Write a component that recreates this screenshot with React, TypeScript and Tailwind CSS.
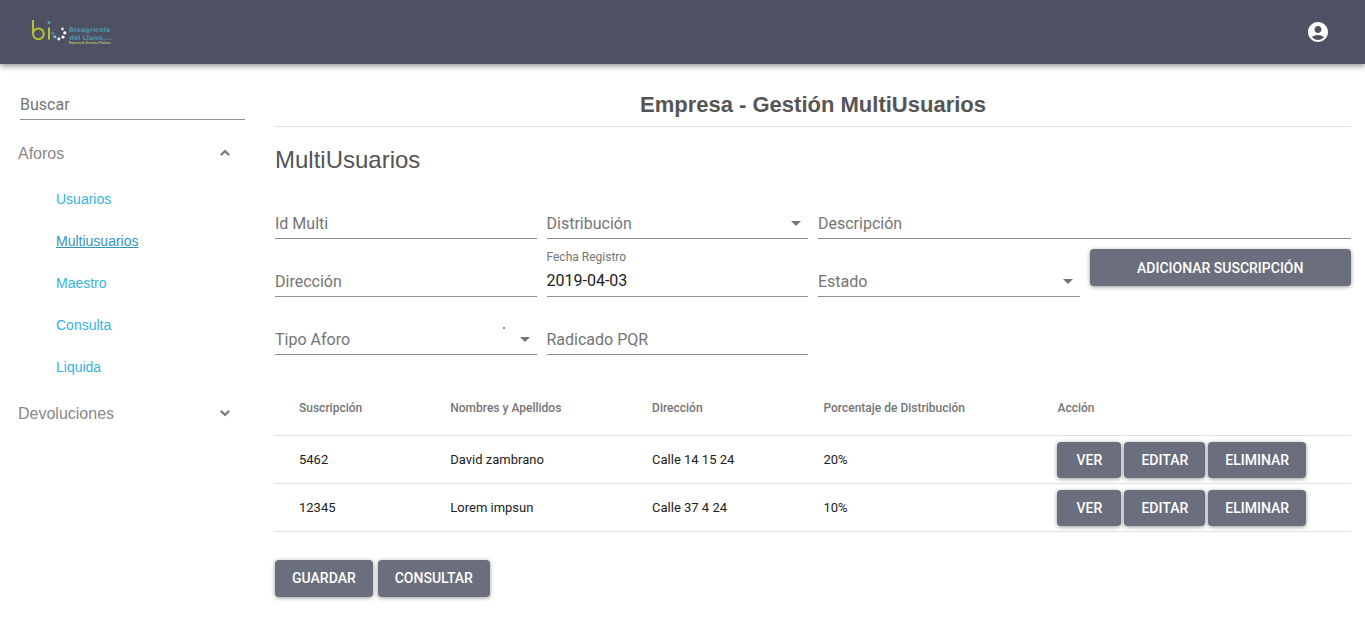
import { useState } from "react";
import type { ReactNode } from "react";
import { MdAccountCircle, MdArrowDropDown } from "react-icons/md";

type FieldProps = {
  id: string;
  label: string;
  initial?: string;
  options?: string[];
  className?: string;
};

function Field({ id, label, initial = "", options, className = "" }: FieldProps) {
  const [value, setValue] = useState(initial);
  const control =
    "col-start-1 row-start-1 h-8 w-full min-w-0 appearance-none rounded-none border-b border-[#8e8e8e] bg-transparent text-base text-[#212121] outline-none focus:border-[#4d5163]";
  const floating = value !== "";
  return (
    <div className={`relative grid h-12 pt-4 ${className}`}>
      {options ? (
        <select id={id} value={value} onChange={(e) => setValue(e.target.value)} className={control}>
          <option value=""></option>
          {options.map((o) => (
            <option key={o}>{o}</option>
          ))}
        </select>
      ) : (
        <input id={id} value={value} onChange={(e) => setValue(e.target.value)} className={control} />
      )}
      <label
        htmlFor={id}
        className={
          floating
            ? "pointer-events-none absolute top-0 left-0 text-xs leading-4 text-[#757575]"
            : "pointer-events-none col-start-1 row-start-1 h-8 pt-px text-base leading-8 text-[#757575]"
        }
      >
        {label}
      </label>
      {options && (
        <MdArrowDropDown
          size={24}
          className="pointer-events-none col-start-1 row-start-1 mt-1 justify-self-end text-[#757575]"
        />
      )}
    </div>
  );
}

function Button({ children, className = "" }: { children: ReactNode; className?: string }) {
  return (
    <button
      type="button"
      className={`min-w-16 rounded bg-[#6b6e7d] px-[17px] text-sm font-medium text-white uppercase shadow-[0_1px_4px_rgba(0,0,0,0.4)] hover:bg-[#5c5f6e] ${className}`}
    >
      {children}
    </button>
  );
}

function Chevron({ up }: { up: boolean }) {
  return (
    <svg width="12" height="8" viewBox="0 0 12 8" fill="none" stroke="#808084" strokeWidth="2.4" aria-hidden="true">
      <path d={up ? "M1.8 6.2 6 2.2l4.2 4" : "M1.8 1.8 6 5.8l4.2-4"} />
    </svg>
  );
}

function Logo() {
  return (
    <svg width="90" height="32" viewBox="0 0 90 32" role="img" aria-label="Bioagrícola del Llano">
      <g fill="none" stroke="#b3c42c" strokeWidth="2">
        <path d="M3 4v13.500" />
        <circle cx="8.400" cy="17.800" r="5.400" />
        <path d="M19 11.500v12" />
      </g>
      <circle cx="19" cy="6.500" r="1.500" fill="#5f9db8" />
      <circle cx="23.800" cy="13.500" r="1.200" fill="#356f94" />
      <circle cx="22.800" cy="17.300" r="1.300" fill="#4c8fb5" />
      <circle cx="24.800" cy="20.800" r="1.500" fill="#8fc1d6" />
      <circle cx="28.800" cy="22.800" r="1.600" fill="#dcebf0" />
      <circle cx="33" cy="21" r="1.600" fill="#ffffff" />
      <circle cx="34.800" cy="16.800" r="1.600" fill="#ffffff" />
      <circle cx="32.500" cy="13" r="1.400" fill="#dfe9ea" />
      <g fill="#5090a8" fontFamily="'DejaVu Sans', sans-serif" fontWeight="700">
        <text x="39" y="16" fontSize="6.500">Bioagrícola</text>
        <text x="39" y="24" fontSize="6.500">del Llano</text>
        <text x="72.500" y="24" fontSize="2.200">S.A ESP</text>
      </g>
      <text x="39" y="28" fontSize="2.800" fill="#c0bd7c" fontFamily="'Liberation Sans', sans-serif" fontWeight="700">
        Empresa de Servicios Públicos
      </text>
    </svg>
  );
}

const links = ["Usuarios", "Multiusuarios", "Maestro", "Consulta", "Liquida"];

const columns = ["Suscripción", "Nombres y Apellidos", "Dirección", "Porcentaje de Distribución", "Acción"];

const rows = [
  ["5462", "David zambrano", "Calle 14 15 24", "20%"],
  ["12345", "Lorem impsun", "Calle 37 4 24", "10%"],
];

function MenuHeading({ label, open, onClick }: { label: string; open: boolean; onClick: () => void }) {
  return (
    <button
      type="button"
      aria-expanded={open}
      onClick={onClick}
      className="flex h-[42px] w-full items-center justify-between pr-[29px] pl-[18px] text-base text-[#888888]"
    >
      <span className="pt-0.5">{label}</span>
      <Chevron up={open} />
    </button>
  );
}

function Sidebar() {
  const [open, setOpen] = useState(true);
  const [returnsOpen, setReturnsOpen] = useState(false);
  return (
    <aside className="w-[260px] shrink-0 pt-2">
      <div className="pr-[15px] pl-5">
        <Field id="buscar" label="Buscar" />
      </div>
      <nav className="pt-3 font-['Liberation_Sans',sans-serif]">
        <MenuHeading label="Aforos" open={open} onClick={() => setOpen(!open)} />
        {open && (
          <ul className="py-1">
            {links.map((name) => (
              <li key={name} className="flex h-[42px] items-center pl-14 text-sm">
                <a
                  href="#"
                  className={name === "Multiusuarios" ? "text-[#3694c0] underline" : "text-[#36b4e0] hover:underline"}
                >
                  {name}
                </a>
              </li>
            ))}
          </ul>
        )}
        <MenuHeading label="Devoluciones" open={returnsOpen} onClick={() => setReturnsOpen(!returnsOpen)} />
      </nav>
    </aside>
  );
}

export default function App() {
  return (
    <div className="min-h-screen bg-white font-[Roboto,sans-serif] text-[#212121]">
      <header className="relative flex h-16 items-center justify-between bg-[#4d5163] pr-[35px] pl-[30px] shadow-[0_2px_6px_rgba(0,0,0,0.45)]">
        <a href="#">
          <Logo />
        </a>
        <button type="button" aria-label="Cuenta" className="text-white">
          <MdAccountCircle size={24} />
        </button>
      </header>

      <div className="flex">
        <Sidebar />
        <main className="min-w-0 flex-1 pt-[25px] pr-[14px] pb-8 pl-[15px]">
          <h1 className="border-b border-[#e0e0e0] pb-[5px] text-center font-['Liberation_Sans',sans-serif] text-[22px] leading-8 font-bold text-[#555555]">
            Empresa - Gestión MultiUsuarios
          </h1>
          <h2 className="pt-[17px] font-['Liberation_Sans',sans-serif] text-2xl text-[#555555]">MultiUsuarios</h2>

          <form className="grid grid-cols-4 gap-[10px] pt-[15px]">
            <Field id="id-multi" label="Id Multi" />
            <Field id="distribucion" label="Distribución" options={["Porcentaje", "Unidades"]} />
            <Field id="descripcion" label="Descripción" className="col-span-2" />
            <Field id="direccion" label="Dirección" />
            <Field id="fecha" label="Fecha Registro" initial="2019-04-03" />
            <Field id="estado" label="Estado" options={["Activo", "Inactivo"]} />
            <Button className="h-[37px] self-start">Adicionar Suscripción</Button>
            <div className="relative">
              <Field id="tipo-aforo" label="Tipo Aforo" options={["Ordinario", "Extraordinario"]} />
              <span className="absolute top-5 right-8 size-0.5 rounded-full bg-[#d2464f]" />
            </div>
            <Field id="radicado" label="Radicado PQR" />
          </form>

          <table className="mt-6 w-full border-collapse text-left">
            <thead>
              <tr className="h-14 border-b border-[#e0e0e0]">
                {columns.map((c) => (
                  <th
                    key={c}
                    scope="col"
                    className="pt-0.5 pr-14 pl-6 text-xs font-medium whitespace-nowrap text-[#757575]"
                  >
                    {c}
                  </th>
                ))}
              </tr>
            </thead>
            <tbody>
              {rows.map((row) => (
                <tr key={row[0]} className="h-12 border-b border-[#e0e0e0] text-[13px]">
                  {row.map((cell) => (
                    <td key={cell} className="pt-0.5 pr-14 pl-6">
                      {cell}
                    </td>
                  ))}
                  <td className="pt-0.5 pr-7 pl-6">
                    <div className="flex gap-[3px]">
                      <Button className="h-9">Ver</Button>
                      <Button className="h-9">Editar</Button>
                      <Button className="h-9">Eliminar</Button>
                    </div>
                  </td>
                </tr>
              ))}
            </tbody>
          </table>

          <div className="flex gap-[5px] pt-7">
            <Button className="h-[37px]">Guardar</Button>
            <Button className="h-[37px]">Consultar</Button>
          </div>
        </main>
      </div>
    </div>
  );
}
